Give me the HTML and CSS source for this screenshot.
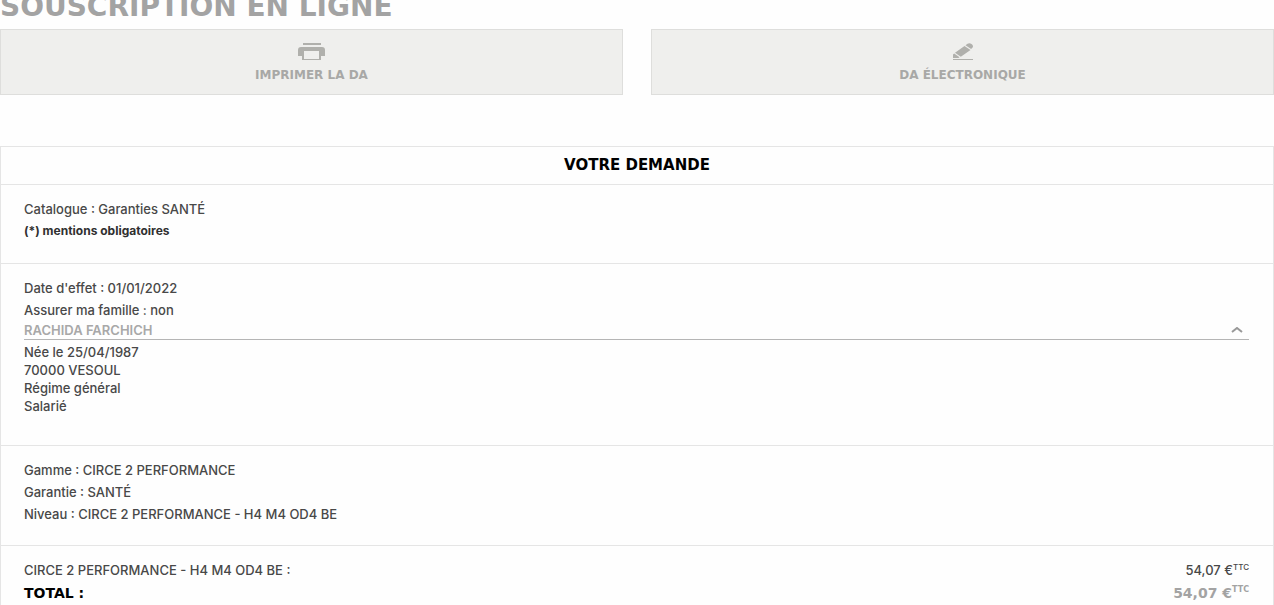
FILE: index.html
```html
<!DOCTYPE html>
<html lang="fr">
<head>
<meta charset="utf-8">
<meta name="viewport" content="width=device-width, initial-scale=1">
<title>Souscription en ligne</title>
<link rel="stylesheet" href="styles.css">
</head>
<body>
<main>
  <h1 class="page-title">SOUSCRIPTION EN LIGNE</h1>
  <div class="actions">
    <button type="button" class="action">
      <svg class="icon-print" viewBox="0 0 27 17" aria-hidden="true">
        <path d="M5 0h18v2H5zM3 4h21q3 0 3 3v6h-4v4H4v-4H0V7q0-3 3-3zM6 8v8h15V8z" fill-rule="evenodd"/>
      </svg>
      <span>IMPRIMER LA DA</span>
    </button>
    <button type="button" class="action">
      <svg class="icon-edit" viewBox="0 0 20 17" aria-hidden="true">
        <path d="M0 16h20v1H0zM0 15v-3.500l1.200-1 5.300 3.700-1 .8zM2 9.800L11.500 3l6 4-9.700 6.800zM12.500 2.200l2-1.500q2-1.200 4 .2t1.300 3.300l-1.700 1.800z"/>
      </svg>
      <span>DA ÉLECTRONIQUE</span>
    </button>
  </div>
  <section class="card">
    <h2 class="card-title">VOTRE DEMANDE</h2>
    <div class="block block-intro">
      <p>Catalogue : Garanties SANTÉ</p>
      <p class="strong">(*) mentions obligatoires</p>
    </div>
    <div class="block block-person">
      <p>Date d'effet : 01/01/2022</p>
      <p>Assurer ma famille : non</p>
      <button type="button" class="person" aria-expanded="true" aria-controls="details">
        <span>RACHIDA FARCHICH</span>
        <svg class="chevron" viewBox="0 0 12 6" aria-hidden="true"><path d="M1 5l5-4 5 4"/></svg>
      </button>
      <div id="details" class="details">
        <p>Née le 25/04/1987</p>
        <p>70000 VESOUL</p>
        <p>Régime général</p>
        <p>Salarié</p>
      </div>
    </div>
    <div class="block">
      <p>Gamme : CIRCE 2 PERFORMANCE</p>
      <p>Garantie : SANTÉ</p>
      <p>Niveau : CIRCE 2 PERFORMANCE - H4 M4 OD4 BE</p>
    </div>
    <div class="block block-total">
      <div class="price-row"><span>CIRCE 2 PERFORMANCE - H4 M4 OD4 BE :</span><span>54,07 €<sup>TTC</sup></span></div>
      <div class="price-row total"><span>TOTAL :</span><span class="amount">54,07 €<sup>TTC</sup></span></div>
    </div>
  </section>
</main>
</body>
</html>
```
FILE: styles.css
```css
* { box-sizing: border-box; }
body {
  margin: 0;
  background: #fefefe;
  color: #484848;
  font: 500 13px/22px Inter, "Liberation Sans", sans-serif;
}
h1, h2, p { margin: 0; }
button { font: inherit; cursor: pointer; }
.page-title, .action, .card-title, .total { font-family: "DejaVu Sans", sans-serif; font-weight: 700; }
.page-title {
  color: #a3a3a3;
  font-size: 28px;
  line-height: 14px;
  margin-bottom: 15px;
}
.actions {
  display: grid;
  grid-template-columns: 1fr 1fr;
  gap: 28px;
  margin-bottom: 51px;
}
.action {
  display: flex;
  flex-direction: column;
  align-items: center;
  gap: 6px;
  padding: 13px 0 10px;
  border: 1px solid #dededc;
  background: #efefed;
  color: #a8a8a6;
  font-size: 12px;
  line-height: 18px;
}
.action svg { fill: #b0b0ac; height: 17px; }
.icon-print { width: 27px; }
.icon-edit { width: 20px; }
.card { border: 1px solid #e5e5e5; border-bottom: 0; }
.card-title {
  color: #000;
  font-size: 15px;
  line-height: 37px;
  text-align: center;
}
.block { border-top: 1px solid #e5e5e5; padding: 13px 24px 20px 23px; }
.block-intro { padding-bottom: 21px; }
.block-person { padding-bottom: 30px; }
.block-total { padding-bottom: 0; }
.strong { color: #303030; font-size: 12px; font-weight: 700; }
.person {
  display: flex;
  justify-content: space-between;
  align-items: center;
  width: 100%;
  padding: 0 6px 0 0;
  border: 0;
  border-bottom: 1px solid #b5b5b5;
  background: none;
  color: #a8a8a8;
  font-weight: 600;
  line-height: 18px;
}
.chevron { width: 12px; height: 6px; fill: none; stroke: #999; stroke-width: 2; }
.details { padding-top: 3px; line-height: 18px; }
.price-row { display: flex; justify-content: space-between; }
.total { color: #000; font-size: 14px; line-height: 24px; }
.amount { color: #a3a3a3; }
sup { font-size: 8px; line-height: 0; }
```
